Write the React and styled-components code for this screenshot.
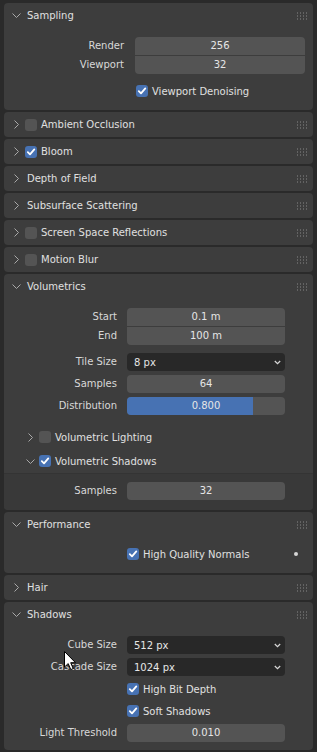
import React from "react";
import styled, { createGlobalStyle } from "styled-components";

const GlobalStyle = createGlobalStyle`
  html, body { margin: 0; padding: 0; background: #2a2a2a; }
  body {
    font-family: "DejaVu Sans", "Liberation Sans", sans-serif;
    font-size: 10px;
    color: #e6e6e6;
  }
  #root { width: 317px; height: 752px; }
`;

const Page = styled.div`
  position: relative;
  width: 317px;
  height: 752px;
  overflow: hidden;
  box-sizing: border-box;
  padding: 3px 4px 0 4px;
  display: flex;
  flex-direction: column;
  gap: 2px;
  background: #2a2a2a;
`;

const PanelBox = styled.div`
  background: #3d3d3d;
  border-radius: 4px;
  flex-shrink: 0;
  overflow: hidden;
`;

const Header = styled.div`
  height: ${(p) => (p.$sub ? 24 : 25)}px;
  display: flex;
  align-items: center;
  padding-left: ${(p) => (p.$sub ? 22 : 8)}px;
  padding-right: 6px;
  box-sizing: border-box;
`;

const ChevronBox = styled.span`
  width: 9px;
  height: 9px;
  display: inline-flex;
  flex-shrink: 0;
`;

const Title = styled.span`
  margin-left: ${(p) => (p.$withBox ? 4 : 6)}px;
  color: #e0e0e0;
  white-space: nowrap;
  flex: 1;
`;

const BoxWrap = styled.span`
  margin-left: 4px;
  display: inline-flex;
`;

const Handle = styled.span`
  display: inline-flex;
  width: 10px;
  height: 8px;
`;

const Body = styled.div`
  padding: ${(p) => p.$pt ?? 9}px 0 ${(p) => p.$pb ?? 10}px 0;
  display: flex;
  flex-direction: column;
`;

const SubBody = styled.div`
  background: #393939;
  border-top: 1px solid #343434;
  padding: 8px 0 10px 0;
  display: flex;
  flex-direction: column;
`;

const PropRow = styled.div`
  display: grid;
  grid-template-columns: ${(p) => p.$labelW}px ${(p) => p.$fieldW}px;
  column-gap: ${(p) => p.$gap}px;
  align-items: center;
  margin-top: ${(p) => p.$mt ?? 0}px;
`;

const Label = styled.span`
  text-align: right;
  color: #d8d8d8;
  white-space: nowrap;
  line-height: 18px;
`;

const AlignedCol = styled.div`
  display: flex;
  flex-direction: column;
  gap: 1px;
`;

const NumField = styled.div`
  position: relative;
  height: 18px;
  line-height: 18px;
  background: #545454;
  border-radius: ${(p) =>
    p.$pos === "top" ? "4px 4px 0 0" : p.$pos === "bottom" ? "0 0 4px 4px" : "4px"};
  text-align: center;
  color: #e6e6e6;
  overflow: hidden;
`;

const SliderFill = styled.div`
  position: absolute;
  left: 0;
  top: 0;
  bottom: 0;
  background: #4772b3;
`;

const SliderText = styled.span`
  position: relative;
`;

const Dropdown = styled.div`
  height: 18px;
  background: #282828;
  border-radius: 4px;
  display: flex;
  align-items: center;
  justify-content: space-between;
  padding: 0 4px 0 7px;
  color: #e6e6e6;
`;

const CheckRow = styled.div`
  height: 18px;
  display: flex;
  align-items: center;
  padding-left: ${(p) => p.$left}px;
  padding-right: 15px;
  margin-top: ${(p) => p.$mt ?? 0}px;
`;

const CheckLabel = styled.span`
  margin-left: 4px;
  color: #e0e0e0;
  white-space: nowrap;
  flex: 1;
`;

const Box = styled.span`
  width: 12px;
  height: 12px;
  border-radius: 3px;
  background: ${(p) => (p.$on ? "#4772b3" : "#545454")};
  display: inline-flex;
  align-items: center;
  justify-content: center;
  flex-shrink: 0;
`;

const Dot = styled.span`
  width: 4px;
  height: 4px;
  border-radius: 50%;
  background: #d6d6d6;
`;

const Cursor = styled.svg`
  position: absolute;
  left: 64px;
  top: 651px;
`;

const Chevron = ({ open }) => (
  <ChevronBox>
    <svg width="9" height="9" viewBox="0 0 9 9">
      {open ? (
        <polyline points="0.5,2.5 4.5,6.5 8.5,2.5" fill="none" stroke="#a9a9a9" strokeWidth="1" />
      ) : (
        <polyline points="2.5,0.5 6.5,4.5 2.5,8.5" fill="none" stroke="#a9a9a9" strokeWidth="1" />
      )}
    </svg>
  </ChevronBox>
);

const CheckBox = ({ on }) => (
  <Box $on={on}>
    {on && (
      <svg width="10" height="10" viewBox="0 0 10 10">
        <polyline points="1.8,5.2 4,7.4 8.3,2.4" fill="none" stroke="#ffffff" strokeWidth="1.8" strokeLinecap="round" strokeLinejoin="round" />
      </svg>
    )}
  </Box>
);

const DragHandle = () => (
  <Handle>
    <svg width="10" height="8" viewBox="0 0 10 8">
      {[0, 3, 6].map((y) =>
        [0, 3, 6, 9].map((x) => (
          <rect key={`${x}-${y}`} x={x} y={y + 0.5} width="1" height="1" fill="#8a8a8a" />
        ))
      )}
    </svg>
  </Handle>
);

const DropChevron = () => (
  <svg width="7" height="5" viewBox="0 0 7 5">
    <polyline points="0.8,1 3.5,3.7 6.2,1" fill="none" stroke="#d8d8d8" strokeWidth="1.2" />
  </svg>
);

const PanelHeader = ({ title, open, check, sub, handle = true }) => (
  <Header $sub={sub}>
    <Chevron open={open} />
    {check !== undefined && (
      <BoxWrap>
        <CheckBox on={check} />
      </BoxWrap>
    )}
    <Title $withBox={check !== undefined}>{title}</Title>
    {handle && <DragHandle />}
  </Header>
);

const Collapsed = ({ title, check }) => (
  <PanelBox>
    <PanelHeader title={title} check={check} />
  </PanelBox>
);

const L2 = { $labelW: 113, $fieldW: 158, $gap: 10 };

export default function App() {
  return (
    <>
      <GlobalStyle />
      <Page>
        <PanelBox>
          <PanelHeader title="Sampling" open />
          <Body>
            <PropRow $labelW={120} $fieldW={170} $gap={11}>
              <AlignedCol>
                <Label>Render</Label>
                <Label>Viewport</Label>
              </AlignedCol>
              <AlignedCol>
                <NumField $pos="top">256</NumField>
                <NumField $pos="bottom">32</NumField>
              </AlignedCol>
            </PropRow>
            <CheckRow $left={132} $mt={8}>
              <CheckBox on />
              <CheckLabel>Viewport Denoising</CheckLabel>
            </CheckRow>
          </Body>
        </PanelBox>

        <Collapsed title="Ambient Occlusion" check={false} />
        <Collapsed title="Bloom" check />
        <Collapsed title="Depth of Field" />
        <Collapsed title="Subsurface Scattering" />
        <Collapsed title="Screen Space Reflections" check={false} />
        <Collapsed title="Motion Blur" check={false} />

        <PanelBox>
          <PanelHeader title="Volumetrics" open />
          <Body $pb={10}>
            <PropRow {...L2}>
              <AlignedCol>
                <Label>Start</Label>
                <Label>End</Label>
              </AlignedCol>
              <AlignedCol>
                <NumField $pos="top">0.1 m</NumField>
                <NumField $pos="bottom">100 m</NumField>
              </AlignedCol>
            </PropRow>
            <PropRow {...L2} $mt={8}>
              <Label>Tile Size</Label>
              <Dropdown>
                <span>8 px</span>
                <DropChevron />
              </Dropdown>
            </PropRow>
            <PropRow {...L2} $mt={4}>
              <Label>Samples</Label>
              <NumField>64</NumField>
            </PropRow>
            <PropRow {...L2} $mt={4}>
              <Label>Distribution</Label>
              <NumField>
                <SliderFill style={{ width: `${0.8 * 100}%` }} />
                <SliderText>0.800</SliderText>
              </NumField>
            </PropRow>
          </Body>
          <PanelHeader title="Volumetric Lighting" check={false} sub handle={false} />
          <PanelHeader title="Volumetric Shadows" check open sub handle={false} />
          <SubBody>
            <PropRow {...L2}>
              <Label>Samples</Label>
              <NumField>32</NumField>
            </PropRow>
          </SubBody>
        </PanelBox>

        <PanelBox>
          <PanelHeader title="Performance" open />
          <Body $pt={8} $pb={10}>
            <CheckRow $left={123}>
              <CheckBox on />
              <CheckLabel>High Quality Normals</CheckLabel>
              <Dot />
            </CheckRow>
          </Body>
        </PanelBox>

        <Collapsed title="Hair" />

        <PanelBox>
          <PanelHeader title="Shadows" open />
          <Body $pb={8}>
            <PropRow {...L2}>
              <Label>Cube Size</Label>
              <Dropdown>
                <span>512 px</span>
                <DropChevron />
              </Dropdown>
            </PropRow>
            <PropRow {...L2} $mt={4}>
              <Label>Cascade Size</Label>
              <Dropdown>
                <span>1024 px</span>
                <DropChevron />
              </Dropdown>
            </PropRow>
            <CheckRow $left={123} $mt={4}>
              <CheckBox on />
              <CheckLabel>High Bit Depth</CheckLabel>
            </CheckRow>
            <CheckRow $left={123} $mt={4}>
              <CheckBox on />
              <CheckLabel>Soft Shadows</CheckLabel>
            </CheckRow>
            <PropRow {...L2} $mt={4}>
              <Label>Light Threshold</Label>
              <NumField>0.010</NumField>
            </PropRow>
          </Body>
        </PanelBox>

        <Cursor width="13" height="20" viewBox="0 0 13 20">
          <path
            d="M0.5,0.5 L0.5,16 L4.2,12.6 L6.8,18.6 L9.2,17.6 L6.7,11.7 L11.5,11.7 Z"
            fill="#ffffff"
            stroke="#000000"
            strokeWidth="1"
            strokeLinejoin="round"
          />
        </Cursor>
      </Page>
    </>
  );
}
